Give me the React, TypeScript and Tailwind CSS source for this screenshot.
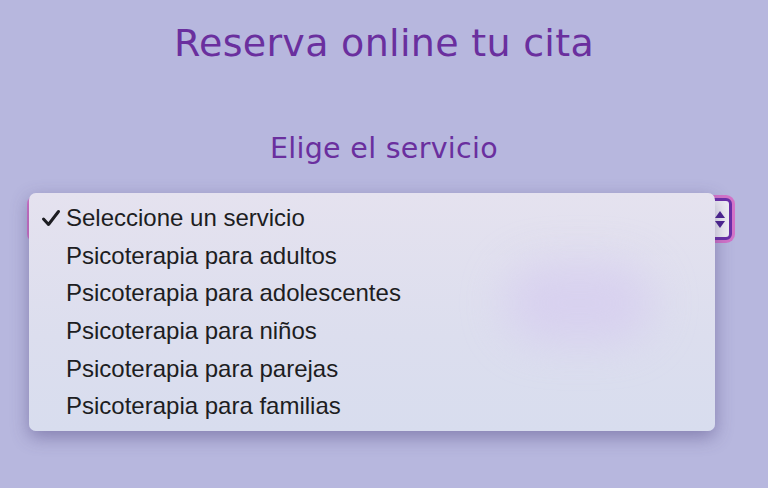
import React from "react";

const services = [
  "Seleccione un servicio",
  "Psicoterapia para adultos",
  "Psicoterapia para adolescentes",
  "Psicoterapia para niños",
  "Psicoterapia para parejas",
  "Psicoterapia para familias",
];

export default function App(): React.JSX.Element {
  return (
    <div className="min-h-[488px] w-full overflow-hidden bg-[#b7b7de] font-['DejaVu_Sans',sans-serif]">
      <div className="flex flex-col items-center pt-[19px]">
        <h1 className="text-[38px] font-normal leading-[48px] tracking-[0.3px] text-[#6a2f9e]">
          Reserva online tu cita
        </h1>
        <h2 className="mt-[63px] text-[28.5px] font-normal leading-[37px] tracking-[0.3px] text-[#6a2f9e]">
          Elige el servicio
        </h2>

        {/* Select with open native menu */}
        <div className="relative mt-[31px] ml-[30px] w-[702px] self-start">
          <div className="h-[42px] w-full rounded-[6px] border-[3px] border-[#6a2fa8] bg-[#efeef4] shadow-[0_0_0_3px_#d373c9]">
            <div className="ml-auto flex h-full w-[18px] flex-col items-center justify-center gap-[3px]">
              <svg width="10" height="7" viewBox="0 0 10 7">
                <path d="M5 0 L10 7 L0 7 Z" fill="#4b2290" />
              </svg>
              <svg width="10" height="7" viewBox="0 0 10 7">
                <path d="M0 0 L10 0 L5 7 Z" fill="#4b2290" />
              </svg>
            </div>
          </div>

          <div className="absolute left-[-1px] top-[-5px] w-[686px] overflow-hidden rounded-[7px] bg-[linear-gradient(180deg,#e5e2ef_0%,#dcdeee_60%,#d8ddee_100%)] py-[6px] font-['Liberation_Sans',sans-serif] shadow-[0_6px_18px_rgba(70,60,120,0.45)]">
            <div className="pointer-events-none absolute left-[475px] top-[70px] h-[80px] w-[150px] rounded-full bg-[#d4c8f0] opacity-60 blur-[22px]" />
            <ul className="relative">
              {services.map((s, i) => (
                <li
                  key={s}
                  className="flex h-[37.7px] items-center text-[24px] text-[#1d1d22]"
                >
                  <span className="flex w-[37px] justify-end pr-[5px]">
                    {i === 0 && (
                      <svg width="20" height="18" viewBox="0 0 20 18">
                        <path
                          d="M2.5 10 L7.5 15.5 L17.5 2.5"
                          fill="none"
                          stroke="#1d1d22"
                          strokeWidth="3"
                          strokeLinecap="round"
                          strokeLinejoin="round"
                        />
                      </svg>
                    )}
                  </span>
                  {s}
                </li>
              ))}
            </ul>
          </div>
        </div>
      </div>
    </div>
  );
}
